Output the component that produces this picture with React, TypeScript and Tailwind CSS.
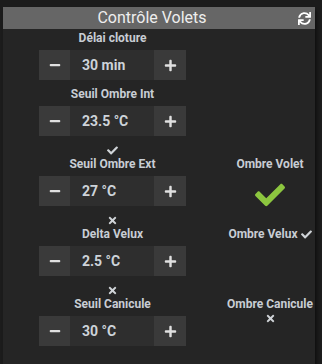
import { FaCheck, FaMinus, FaPlus, FaSync, FaTimes } from "react-icons/fa";

type Status = "check" | "times" | null;

const Stepper = ({ value }: { value: string }) => (
  <div className="flex h-[30px] w-[147px]">
    <button className="flex w-[31px] items-center justify-center bg-[#3a3a3a] text-[#e0e0e0]">
      <FaMinus size={12} />
    </button>
    <div className="flex flex-1 items-center bg-[#2e2e2e] pl-[12px] text-[14px] font-bold text-[#cdd3d9]">
      {value}
    </div>
    <button className="flex w-[32px] items-center justify-center bg-[#3a3a3a] text-[#e0e0e0]">
      <FaPlus size={13} />
    </button>
  </div>
);

const StatusIcon = ({ status, size = 11 }: { status: Status; size?: number }) => {
  if (status === "check") return <FaCheck size={size} className="text-[#d0d4d8]" />;
  if (status === "times") return <FaTimes size={size} className="text-[#d0d4d8]" />;
  return null;
};

const Row = ({
  label,
  value,
  status,
  right,
}: {
  label: string;
  value: string;
  status?: Status;
  right?: React.ReactNode;
}) => (
  <div className="flex">
    <div className="flex w-[219px] flex-col items-center pb-[7px]">
      {status !== undefined && (
        <div className="flex h-[14px] items-center justify-center">
          <StatusIcon status={status} />
        </div>
      )}
      <div className="h-[14px] text-[12px] font-bold leading-[14px] text-[#c8cdd4]">{label}</div>
      <div className="mt-[5px]">
        <Stepper value={value} />
      </div>
    </div>
    <div className="flex flex-1 flex-col items-center pt-[14px] pl-[3px]">{right}</div>
  </div>
);

export default function App() {
  return (
    <div className="h-[364px] w-[322px] bg-[#1c1c1c] pt-[7px] pl-[3px] font-['Roboto',sans-serif]">
      <div className="w-[312px] bg-[#252525] pb-[11px] shadow-[2px_3px_3px_rgba(0,0,0,0.45)]">
        <div className="flex h-[22px] items-center bg-[#666666] pr-[4px]">
          <div className="flex-1 pl-[3px] text-center text-[16px] leading-[22px] text-[#eeeeee]">
            Contrôle Volets
          </div>
          <FaSync size={13} className="text-white" />
        </div>
        <div className="pt-[2px]">
          <Row label="Délai cloture" value="30 min" />
          <Row label="Seuil Ombre Int" value="23.5 °C" />
          <Row
            label="Seuil Ombre Ext"
            value="27 °C"
            status="check"
            right={
              <>
                <div className="h-[14px] text-[12px] font-bold leading-[14px] text-[#c8cdd4]">Ombre Volet</div>
                <div className="mt-[9px]">
                  <FaCheck size={30} className="text-[#8cc63f]" />
                </div>
              </>
            }
          />
          <Row
            label="Delta Velux"
            value="2.5 °C"
            status="times"
            right={
              <div className="flex h-[14px] items-center gap-[3px] text-[12px] font-bold leading-[14px] text-[#c8cdd4]">
                Ombre Velux
                <FaCheck size={11} className="text-[#d0d4d8]" />
              </div>
            }
          />
          <Row
            label="Seuil Canicule"
            value="30 °C"
            status="times"
            right={
              <>
                <div className="h-[14px] text-[12px] font-bold leading-[14px] text-[#c8cdd4]">Ombre Canicule</div>
                <div className="flex h-[14px] items-center">
                  <FaTimes size={11} className="text-[#d0d4d8]" />
                </div>
              </>
            }
          />
        </div>
      </div>
    </div>
  );
}
